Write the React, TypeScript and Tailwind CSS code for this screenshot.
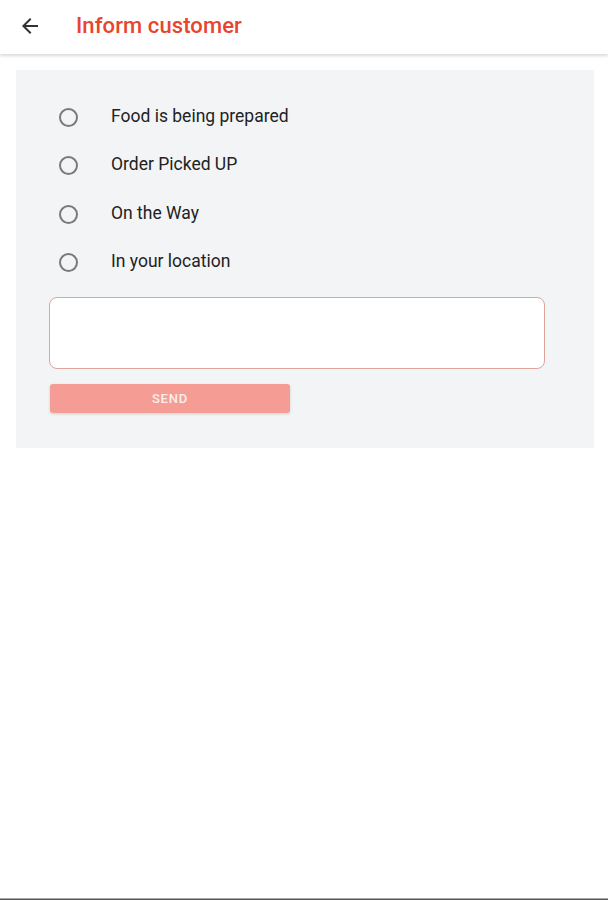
const options = [
  "Food is being prepared",
  "Order Picked UP",
  "On the Way",
  "In your location",
];

export default function App() {
  return (
    <div className="relative h-[900px] w-[608px] bg-white font-['Roboto',sans-serif]">
      {/* Header */}
      <header className="flex h-[54px] items-center bg-white pb-[3px] shadow-[0_2px_3px_rgba(0,0,0,0.15)]">
        <button className="ml-[18px] flex h-6 w-6 items-center justify-center text-[#333]">
          <svg viewBox="0 0 24 24" className="h-6 w-6" fill="currentColor">
            <path d="M20 11H7.83l5.59-5.59L12 4l-8 8 8 8 1.41-1.41L7.83 13H20v-2z" />
          </svg>
        </button>
        <h1 className="ml-[34px] text-[22px] font-medium tracking-[0.1px] text-[#e8452e]">
          Inform customer
        </h1>
      </header>

      {/* Panel */}
      <div className="mx-4 mt-4 w-[578px] bg-[#f3f4f6] pl-[33px] pr-[49px] pt-[23px] pb-[35px]">
        <div className="flex flex-col">
          {options.map((o) => (
            <label key={o} className="flex h-[48.5px] items-center">
              <span className="ml-[10px] block h-[19px] w-[19px] rounded-full border-2 border-[#7a7a7a]" />
              <span className="ml-[33px] -mt-[3px] text-[17.5px] text-[#222]">{o}</span>
            </label>
          ))}
        </div>
        <textarea className="mt-[10px] block h-[72px] w-full resize-none rounded-lg border border-[#dfa49c] bg-white outline-none" />
        <button className="ml-px mt-[15px] flex h-[29px] w-[240px] items-center justify-center rounded-[3px] bg-[#f59d94] text-[13px] font-medium tracking-[0.8px] text-[#fdeeed] shadow-[0_1px_3px_rgba(0,0,0,0.15)]">
          SEND
        </button>
      </div>

      <div className="absolute bottom-0 left-0 h-[2px] w-full bg-[#555] border-t border-[#aaa]" />
    </div>
  );
}
